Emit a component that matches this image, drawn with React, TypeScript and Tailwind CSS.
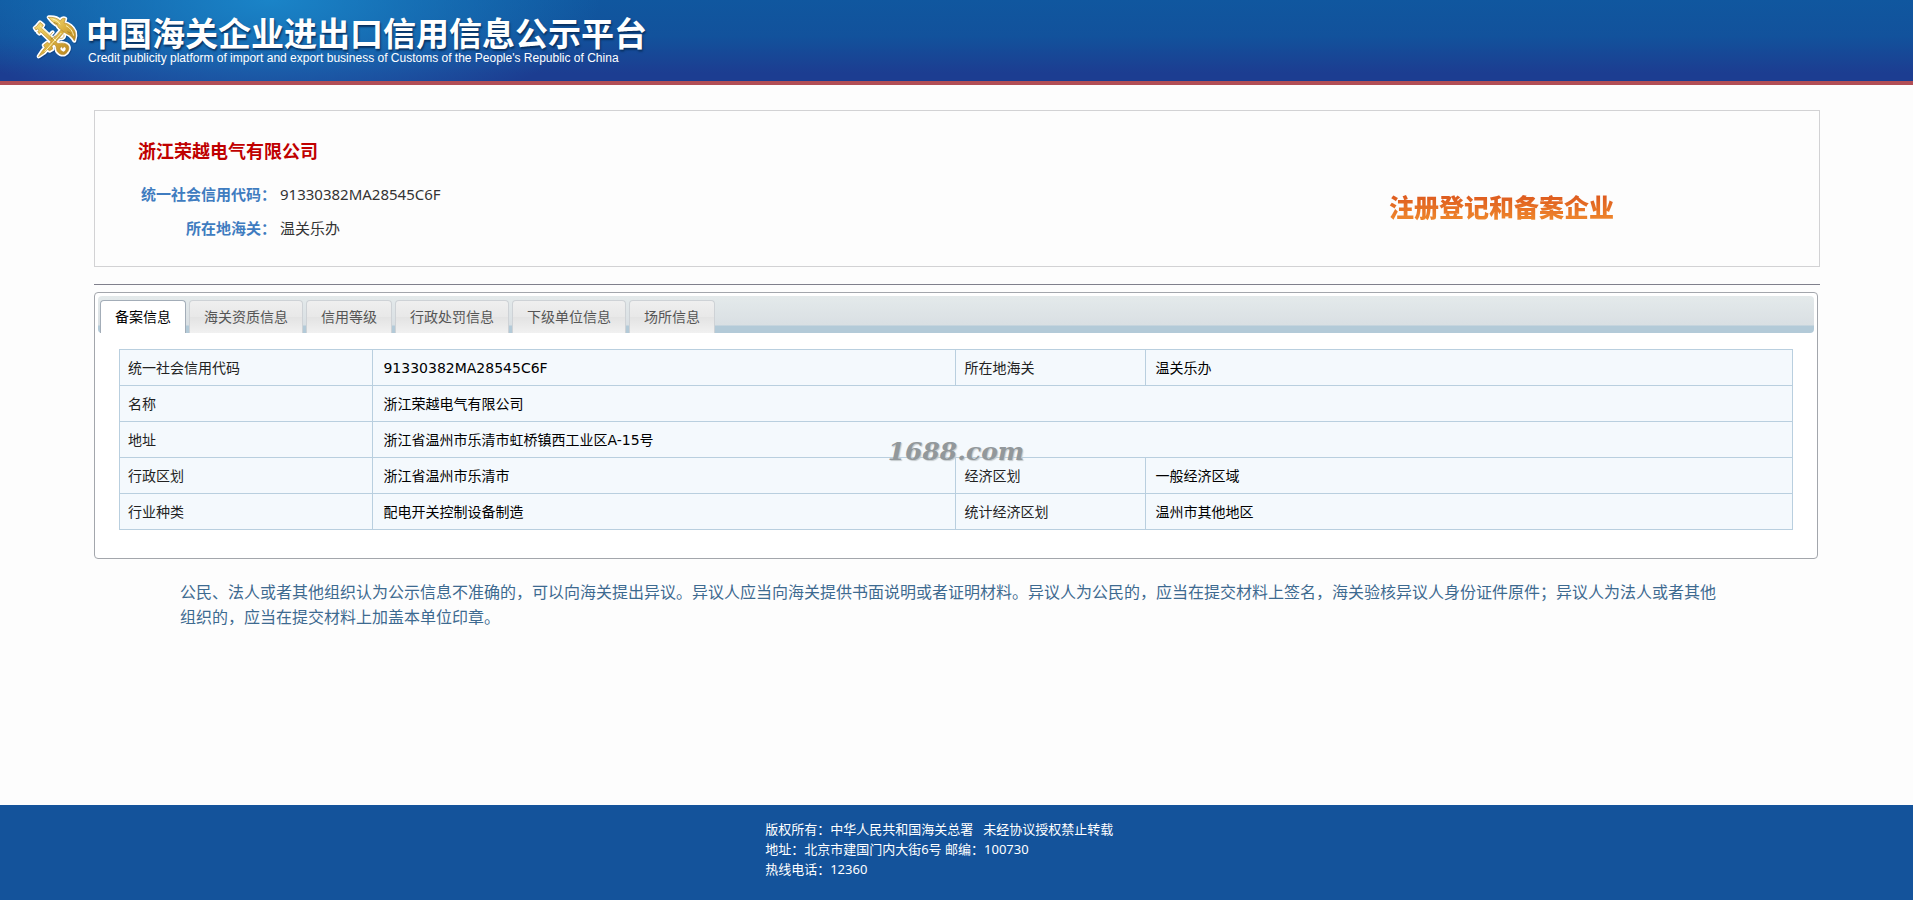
import { useState } from "react";

const TABS = ["备案信息", "海关资质信息", "信用等级", "行政处罚信息", "下级单位信息", "场所信息"];

const LABEL = "border border-[#b9cfdf] pb-[6px] pt-2 pl-2 pr-2 text-left font-normal text-[#222]";
const VALUE = "border border-[#b9cfdf] pb-[6px] pt-2 pl-[10px] pr-2 text-black";

function Emblem() {
  return (
    <svg viewBox="0 0 210 195" className="h-[65px] w-[70px] shrink-0" aria-hidden="true">
      <defs>
        <linearGradient id="gold" x1="0" y1="0" x2="1" y2="1">
          <stop offset="0" stopColor="#f3dc7c" />
          <stop offset="0.5" stopColor="#dcb342" />
          <stop offset="1" stopColor="#b98720" />
        </linearGradient>
        <g id="keys" strokeLinecap="round" strokeLinejoin="round">
          <path d="M56 154 L66 139 L75 128 L71 120 L82 112 L88 116 L124 74 L132 82 L96 124 L98 132 L89 137 L82 133 L73 143 Z" />
          <path d="M86 37 C100 36 114 40 121 48 C124 41 130 38 136 41 L132 54 C146 55 160 66 165 80 C168 92 166 100 163 107 C158 98 152 90 140 86 C134 82 130 80 126 76 C120 72 114 68 112 61 C104 58 94 48 86 37 Z" />
          <path d="M50 64 L60 52 L70 60 L64 69 L114 116 C124 113 138 114 144 121 C150 129 145 142 134 148 C124 151 115 145 111 138 C109 130 109 126 107 122 L90 107 L62 80 L58 86 L53 81 L57 76 L52 72 L48 75 L44 69 Z M122 126 C117 131 122 138 131 141 C139 136 140 130 135 126 C132 124 130 127 128 130 C127 126 125 124 122 126 Z" fillRule="evenodd" />
          <path d="M98 82 C88 88 88 102 98 102 M117 98 C124 104 134 98 132 90" fill="none" />
        </g>
      </defs>
      <use href="#keys" x="3" y="4" fill="#0b2f66" stroke="#0b2f66" strokeWidth="11" opacity="0.35" />
      <use href="#keys" fill="#fff" stroke="#fff" strokeWidth="12" />
      <use href="#keys" fill="url(#gold)" stroke="#b58a2a" strokeWidth="2" />
      <path d="M60 62 L108 108 M74 140 L124 84 M98 42 C108 45 116 50 120 58 M138 62 C150 68 158 78 161 92" stroke="#fff3b4" strokeWidth="3" fill="none" />
      <path d="M102 52 L114 58 M142 80 L154 86 M92 104 L106 92" stroke="#96701c" strokeWidth="2" fill="none" />
    </svg>
  );
}

export default function App() {
  const [active, setActive] = useState(0);

  return (
    <div className="flex min-h-screen flex-col bg-[#fdfdfd] font-['DejaVu_Sans','Noto_Sans_CJK_SC',sans-serif] text-sm">
      <header className="flex h-[85px] items-start border-b-4 border-[#b24e56] bg-[radial-gradient(ellipse_330px_125px_at_270px_0px,#1a84c8_0%,#1a80c4a0_40%,transparent_100%),linear-gradient(to_bottom,#10579f_0%,#12529c_45%,#1c3d91_90%)] pl-5 pt-[5px]">
        <Emblem />
        <div className="-ml-1 pt-2 text-white">
          <h1 className="whitespace-nowrap font-['Noto_Sans_CJK_SC',sans-serif] text-[33px] font-bold leading-[38px] [text-shadow:1px_2px_2px_#083060]">
            中国海关企业进出口信用信息公示平台
          </h1>
          <p className="pl-0.5 font-['Liberation_Sans',Arial,sans-serif] text-xs leading-[14px]">
            Credit publicity platform of import and export business of Customs of the People's Republic of China
          </p>
        </div>
      </header>

      <main className="ml-[94px] mr-[93px] flex-1 pb-10 pt-[25px]">
        <section className="flex h-[157px] items-center justify-between border border-[#d2d2d4] pl-[43px]">
          <div>
            <h2 className="font-['Noto_Sans_CJK_SC',sans-serif] text-lg font-bold leading-[34px] text-[#c00000]">
              浙江荣越电气有限公司
            </h2>
            <dl className="mt-[10px] grid grid-cols-[138px_1fr] gap-x-1 font-['Noto_Sans','Noto_Sans_CJK_SC',sans-serif] text-[15px] leading-[34px] text-[#333]">
              <dt className="text-right font-bold text-[#3f7cc0]">统一社会信用代码：</dt>
              <dd>91330382MA28545C6F</dd>
              <dt className="text-right font-bold text-[#3f7cc0]">所在地海关：</dt>
              <dd>温关乐办</dd>
            </dl>
          </div>
          <strong className="mr-[205px] mt-[34px] bg-linear-to-b from-[#d9501c] to-[#f08a2c] bg-clip-text font-['Noto_Sans_CJK_SC',sans-serif] text-[25px] font-black leading-8 text-transparent">
            注册登记和备案企业
          </strong>
        </section>

        <hr className="mt-[17px] border-[#80808c]" />

        <section className="relative mr-0.5 mt-[7px] rounded border border-[#a3a6ac] bg-white px-[3px] pb-7 pt-[3px]">
          <div
            role="tablist"
            className="flex h-[37px] items-end gap-[3px] rounded bg-[linear-gradient(to_bottom,#e4eaeb_0px,#d9dfe3_29px,#b3cad8_30px,#b3cad8_37px)] pl-0.5"
          >
            {TABS.map((tab, i) => (
              <button
                key={tab}
                type="button"
                role="tab"
                aria-selected={i === active}
                onClick={() => setActive(i)}
                className={
                  i === active
                    ? "h-[33px] rounded-t border border-b-0 border-[#a3adb8] bg-white px-[14px] text-black"
                    : "h-[33px] rounded-t border border-b-0 border-[#ced2d6] bg-[linear-gradient(to_bottom,#efefef_0%,#e8e8e8_50%,#e3e3e3_51%,#f1f1f1_100%)] px-[14px] text-[#555]"
                }
              >
                {tab}
              </button>
            ))}
          </div>

          <div className="px-[21px] pt-4">
            <table className="w-full table-fixed border-collapse bg-[#f4f9fd] leading-[21px]">
              <colgroup>
                <col className="w-[15.15%]" />
                <col className="w-[34.85%]" />
                <col className="w-[11.3%]" />
                <col />
              </colgroup>
              <tbody>
                <tr>
                  <th scope="row" className={LABEL}>统一社会信用代码</th>
                  <td className={VALUE}>91330382MA28545C6F</td>
                  <th scope="row" className={LABEL}>所在地海关</th>
                  <td className={VALUE}>温关乐办</td>
                </tr>
                <tr>
                  <th scope="row" className={LABEL}>名称</th>
                  <td colSpan={3} className={VALUE}>浙江荣越电气有限公司</td>
                </tr>
                <tr>
                  <th scope="row" className={LABEL}>地址</th>
                  <td colSpan={3} className={VALUE}>浙江省温州市乐清市虹桥镇西工业区A-15号</td>
                </tr>
                <tr>
                  <th scope="row" className={LABEL}>行政区划</th>
                  <td className={VALUE}>浙江省温州市乐清市</td>
                  <th scope="row" className={LABEL}>经济区划</th>
                  <td className={VALUE}>一般经济区域</td>
                </tr>
                <tr>
                  <th scope="row" className={LABEL}>行业种类</th>
                  <td className={VALUE}>配电开关控制设备制造</td>
                  <th scope="row" className={LABEL}>统计经济区划</th>
                  <td className={VALUE}>温州市其他地区</td>
                </tr>
              </tbody>
            </table>
          </div>

          <span className="pointer-events-none absolute inset-x-0 top-[143px] text-center font-['DejaVu_Serif',serif] text-[25px] font-bold italic leading-8 text-[#92989b] [text-shadow:1px_1px_1px_#c4cacd]">
            1688.com
          </span>
        </section>

        <p className="mt-5 pl-[86px] pr-[100px] font-['Noto_Sans_CJK_SC',sans-serif] text-base leading-[25px] text-[#3d6a90]">
          公民、法人或者其他组织认为公示信息不准确的，可以向海关提出异议。异议人应当向海关提供书面说明或者证明材料。异议人为公民的，应当在提交材料上签名，海关验核异议人身份证件原件；异议人为法人或者其他组织的，应当在提交材料上加盖本单位印章。
        </p>
      </main>

      <footer className="h-[95px] bg-[#14539b] pl-[40%] pt-[14px] font-['Noto_Sans','Noto_Sans_CJK_SC',sans-serif] text-[13px] leading-5 text-white">
        <p>版权所有：中华人民共和国海关总署 &nbsp; 未经协议授权禁止转载</p>
        <p>地址：北京市建国门内大街6号 邮编：100730</p>
        <p>热线电话：12360</p>
      </footer>
    </div>
  );
}
